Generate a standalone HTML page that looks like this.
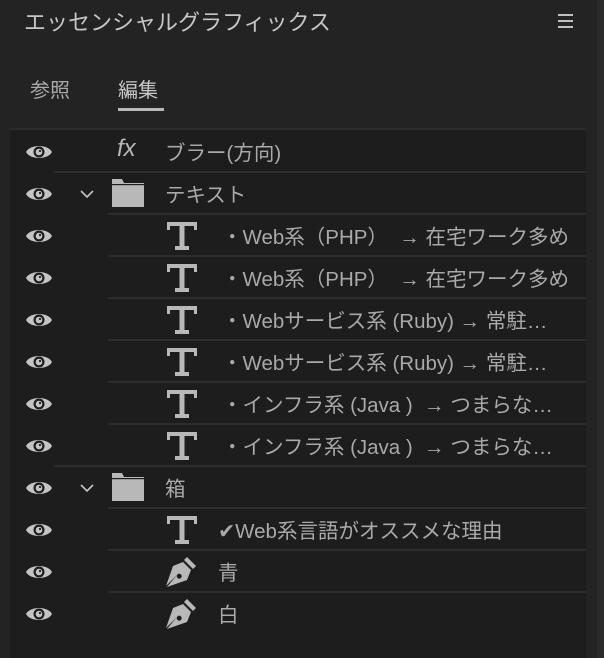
<!DOCTYPE html>
<html><head><meta charset="utf-8"><style>
*{margin:0;padding:0;box-sizing:border-box}
body{width:604px;height:658px;background:#232323;position:relative;overflow:hidden;font-family:"Liberation Sans","Noto Sans CJK JP",sans-serif;color:#a9a9a9}
.title{position:absolute;left:24px;top:5px;font-size:22px;color:#c6c6c6;white-space:nowrap}
.menu{position:absolute;left:558px;top:14px;width:15px}
.menu i{display:block;height:2px;background:#c0c0c0;margin-bottom:4px}
.tab{position:absolute;top:74px;font-size:20px}
.ul{position:absolute;left:118px;top:108px;width:46px;height:3px;background:#b8b8b8}
.strip{position:absolute;left:597px;top:0;width:7px;height:658px;background:#2b2b2b}
.panel{position:absolute;left:10px;top:128px;width:576px;height:530px;background:#1d1d1d;border-top:2px solid #2c2c2c}
.row{position:absolute;left:0;width:576px;height:42px}
.sep{position:absolute;height:2px;background:#2c2c2c;right:0;bottom:0}
.eye{position:absolute;left:15px;top:12px}
.txt{position:absolute;top:5px;font-size:20.5px;white-space:pre;overflow:hidden;width:362px}
.ic{position:absolute}
</style></head><body>
<div class="title">エッセンシャルグラフィックス</div>
<div class="menu"><i></i><i></i><i></i></div>
<div class="tab" style="left:30px">参照</div>
<div class="tab" style="left:118px;color:#c8c8c8">編集</div>
<div class="ul"></div>
<div class="strip"></div>
<div class="panel">
<svg width="0" height="0" style="position:absolute"><defs>
<symbol id="eye" viewBox="0 0 28 18"><path d="M1 9C5 1 23 1 27 9C23 17 5 17 1 9Z" fill="#c4c4c4"/><circle cx="14" cy="9" r="5.5" fill="#1d1d1d"/><circle cx="14" cy="9" r="3.3" fill="#c4c4c4"/><circle cx="15" cy="8" r="1.1" fill="#1d1d1d"/></symbol>
<symbol id="T" viewBox="0 0 30 28"><path d="M0 0H30V8H27V4H17.5V24H22V28H8V24H12.5V4H3V8H0Z" fill="#b8b8b8"/></symbol>
<symbol id="fold" viewBox="0 0 32 28"><path d="M0 0H10L12 4H32V28H0Z" fill="#b8b8b8"/><rect x="0" y="5" width="32" height="1.2" fill="#1d1d1d"/></symbol>
<symbol id="pen" viewBox="0 0 32 32"><path d="M22 1L31 10L28 13L19 4Z" fill="#b8b8b8"/><path d="M18 6L26 14L22 24L2 31L12 19A2.5 2.5 0 1 0 13 18L1 30L8 10Z" fill="#b8b8b8"/></symbol>
<symbol id="chev" viewBox="0 0 14 8"><path d="M1 1L7 7L13 1" stroke="#c4c4c4" stroke-width="1.6" fill="none"/></symbol>
</defs></svg>

<div class="row" style="top:1px"><svg class="eye" width="28" height="18"><use href="#eye"/></svg>
<div class="txt" style="left:107px;top:4px;font-style:italic;font-size:24px;color:#b8b8b8">fx</div>
<div class="txt" style="left:155px">ブラー(方向)</div><div class="sep" style="left:44px"></div></div>

<div class="row" style="top:43px"><svg class="eye" width="28" height="18"><use href="#eye"/></svg>
<svg class="ic" style="left:70px;top:17px" width="14" height="8"><use href="#chev"/></svg>
<svg class="ic" style="left:102px;top:6px" width="32" height="28"><use href="#fold"/></svg>
<div class="txt" style="left:155px">テキスト</div><div class="sep" style="left:98px"></div></div>

<div class="row" style="top:85px"><svg class="eye" width="28" height="18"><use href="#eye"/></svg><svg class="ic" style="left:157px;top:7px" width="30" height="28"><use href="#T"/></svg><div class="txt" style="left:212px">・Web系（PHP）  → 在宅ワーク多め</div><div class="sep" style="left:98px"></div></div>
<div class="row" style="top:127px"><svg class="eye" width="28" height="18"><use href="#eye"/></svg><svg class="ic" style="left:157px;top:7px" width="30" height="28"><use href="#T"/></svg><div class="txt" style="left:212px">・Web系（PHP）  → 在宅ワーク多め</div><div class="sep" style="left:98px"></div></div>
<div class="row" style="top:169px"><svg class="eye" width="28" height="18"><use href="#eye"/></svg><svg class="ic" style="left:157px;top:7px" width="30" height="28"><use href="#T"/></svg><div class="txt" style="left:212px;width:340px">・Webサービス系 (Ruby) → 常駐…</div><div class="sep" style="left:98px"></div></div>
<div class="row" style="top:211px"><svg class="eye" width="28" height="18"><use href="#eye"/></svg><svg class="ic" style="left:157px;top:7px" width="30" height="28"><use href="#T"/></svg><div class="txt" style="left:212px;width:340px">・Webサービス系 (Ruby) → 常駐…</div><div class="sep" style="left:98px"></div></div>
<div class="row" style="top:253px"><svg class="eye" width="28" height="18"><use href="#eye"/></svg><svg class="ic" style="left:157px;top:7px" width="30" height="28"><use href="#T"/></svg><div class="txt" style="left:212px;width:340px">・インフラ系 (Java )  → つまらな…</div><div class="sep" style="left:98px"></div></div>
<div class="row" style="top:295px"><svg class="eye" width="28" height="18"><use href="#eye"/></svg><svg class="ic" style="left:157px;top:7px" width="30" height="28"><use href="#T"/></svg><div class="txt" style="left:212px;width:340px">・インフラ系 (Java )  → つまらな…</div><div class="sep" style="left:44px"></div></div>

<div class="row" style="top:337px"><svg class="eye" width="28" height="18"><use href="#eye"/></svg>
<svg class="ic" style="left:70px;top:17px" width="14" height="8"><use href="#chev"/></svg>
<svg class="ic" style="left:102px;top:6px" width="32" height="28"><use href="#fold"/></svg>
<div class="txt" style="left:155px">箱</div><div class="sep" style="left:98px"></div></div>

<div class="row" style="top:379px"><svg class="eye" width="28" height="18"><use href="#eye"/></svg><svg class="ic" style="left:157px;top:7px" width="30" height="28"><use href="#T"/></svg><div class="txt" style="left:208px">✔Web系言語がオススメな理由</div><div class="sep" style="left:98px"></div></div>
<div class="row" style="top:421px"><svg class="eye" width="28" height="18"><use href="#eye"/></svg><svg class="ic" style="left:155px;top:5px" width="32" height="32"><use href="#pen"/></svg><div class="txt" style="left:208px">青</div><div class="sep" style="left:98px"></div></div>
<div class="row" style="top:463px"><svg class="eye" width="28" height="18"><use href="#eye"/></svg><svg class="ic" style="left:155px;top:5px" width="32" height="32"><use href="#pen"/></svg><div class="txt" style="left:208px">白</div></div>
</div>
</body></html>
